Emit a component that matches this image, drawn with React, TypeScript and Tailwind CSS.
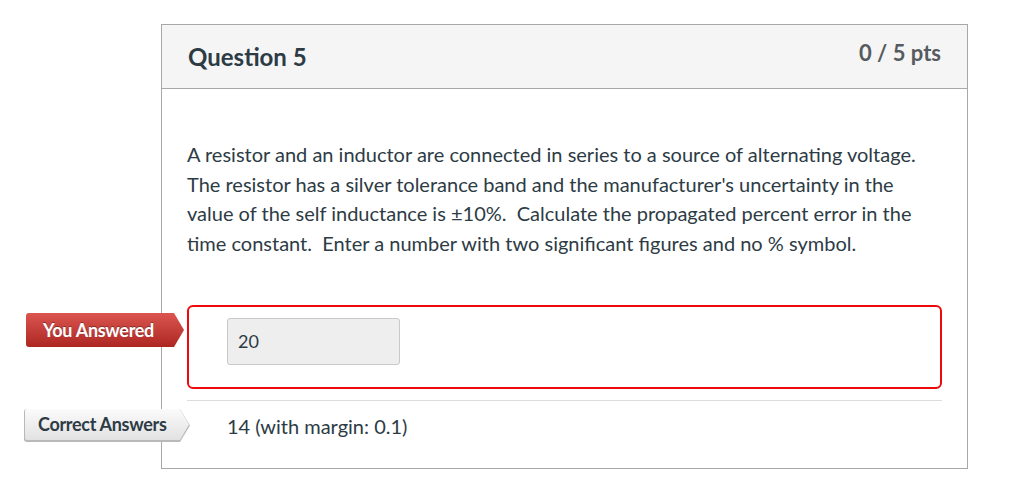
import * as React from 'react';

const font = "font-['Lato','Open_Sans',sans-serif]";

function AnswerTag({ label, variant }: { label: string; variant: 'wrong' | 'correct' }) {
  if (variant === 'wrong') {
    return (
      <div
        className="h-[34px] w-[158px] rounded-l-[3px] bg-gradient-to-b from-[#dc5550] to-[#ad2622] flex items-center pl-[17px] [clip-path:polygon(0_0,148px_0,158px_17px,148px_34px,0_34px)]"
      >
        <span className="text-white font-bold text-[18px] tracking-[-0.3px] [text-shadow:0_-1px_0_rgba(0,0,0,0.35)]">{label}</span>
      </div>
    );
  }
  return (
    <div className="h-[33px] w-[166px] bg-[#b9b9b9] [clip-path:polygon(0_0,156px_0,166px_16.5px,156px_33px,0_33px)] rounded-l-[3px]">
      <div className="m-px h-[31px] w-[164px] bg-gradient-to-b from-[#fbfbfb] to-[#e2e2e2] flex items-center pl-[13px] rounded-l-[2px] [clip-path:polygon(0_0,155px_0,164px_15.5px,155px_31px,0_31px)]">
        <span className="text-[#2d3b45] font-bold text-[18px] tracking-[-0.3px]">{label}</span>
      </div>
    </div>
  );
}

export default function App() {
  return (
    <div className={`${font} min-h-[490px] w-[1026px] bg-white pl-[161px] pt-[24px] text-[#2d3b45]`}>
      <div className="w-[807px] border border-[#a8a8a8]">
        {/* header */}
        <div className="h-[64px] bg-[#f5f5f5] border-b border-[#a8a8a8] flex justify-between pl-[26px] pr-[26px]">
          <h2 className="pt-[17px] text-[24px] font-bold leading-[30px] text-[#2d3b45]">Question 5</h2>
          <div className="pt-[13px] text-[22px] font-bold leading-[30px] text-[#555b60]">0 / 5 pts</div>
        </div>

        {/* body */}
        <div className="pt-[51px] pb-[27px] px-[25px]">
          <p className="text-[20px] leading-[29.5px]">
            A resistor and an inductor are connected in series to a source of alternating voltage.
            <br />
            The resistor has a silver tolerance band and the manufacturer's uncertainty in the
            <br />
            value of the self inductance is ±10%.&nbsp; Calculate the propagated percent error in the
            <br />
            time constant.&nbsp; Enter a number with two significant figures and no % symbol.
          </p>

          <div className="mt-[47px] flex flex-col">
            {/* your answer */}
            <div className="relative h-[84px] rounded-[6px] border-2 border-[#ee0a0a] pl-[38px] pt-[11px]">
              <div className="absolute left-[-163px] top-[6px]">
                <AnswerTag label="You Answered" variant="wrong" />
              </div>
              <div className="h-[47px] w-[173px] rounded-[3px] border border-[#c9c9c9] bg-[#eeeeee] flex items-center pl-[10px] text-[18px] text-[#2d3b45]">
                20
              </div>
            </div>

            <div className="mt-[11px] border-t border-[#dddddd]" />

            {/* correct answer */}
            <div className="relative h-[40px] pl-[40px] flex items-center">
              <div className="absolute left-[-163px] top-[7px]">
                <AnswerTag label="Correct Answers" variant="correct" />
              </div>
              <span className="text-[20px] pt-[10px]">14 (with margin: 0.1)</span>
            </div>
          </div>
        </div>
      </div>
    </div>
  );
}
